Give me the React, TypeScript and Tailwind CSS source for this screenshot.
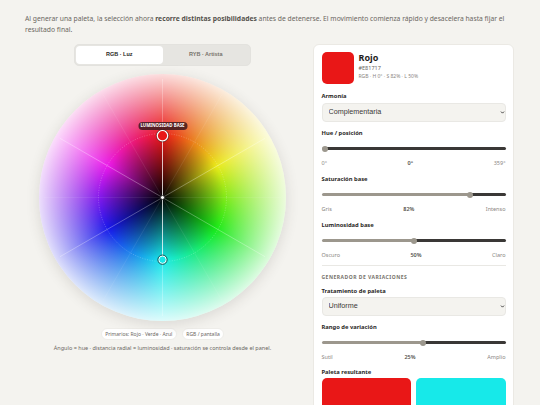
import { ChevronDown } from 'lucide-react'

const spokes = [0, 30, 60, 90, 120, 150, 180, 210, 240, 270, 300, 330]

function Slider({ className, label, pct, left, mid, right }: { className: string; label: string; pct: number; left: string; mid: string; right: string }) {
  return (
    <div className={className}>
      <div className="text-[5.8px] font-bold leading-[10px] text-[#2a2826]">{label}</div>
      <div className="mt-[6px] flex h-[10px] items-center">
        <div className="h-[3px] rounded-l-full bg-[#9c978d]" style={{ width: `calc((100% - 6px) * ${pct / 100} + 3px)` }} />
        <div className="z-10 -mx-[3px] h-[6px] w-[6px] shrink-0 rounded-full bg-[#9c978d]" />
        <div className="h-[3px] flex-1 rounded-r-full bg-[#3a3836]" />
      </div>
      <div className="mt-[5px] flex justify-between text-[5.5px] leading-[8px] text-[#8a867f]">
        <span>{left}</span>
        <span className="font-semibold text-[#55524d]">{mid}</span>
        <span>{right}</span>
      </div>
    </div>
  )
}

function Select({ className, value }: { className: string; value: string }) {
  return (
    <div className={`relative ${className}`}>
      <select className="block h-[19px] w-full appearance-none rounded-[4px] border border-[#e9e8e4] bg-[#f4f3ef] pl-[6px] font-['Liberation_Sans',sans-serif] text-[7.2px] text-[#3a3836]">
        <option>{value}</option>
      </select>
      <ChevronDown className="pointer-events-none absolute right-[1px] top-[7px] h-[5px] w-[5px] text-[#222]" strokeWidth={4} />
    </div>
  )
}

function Wheel() {
  return (
    <div className="relative h-[247px] w-[247px] rounded-full bg-[radial-gradient(circle_closest-side,#000_0%,rgba(0,0,0,0)_50%,rgba(255,255,255,0)_50%,rgba(255,255,255,0.86)_100%),conic-gradient(#e91818,#e9e918,#18e918,#18e9e9,#1818e9,#e918e9,#e91818)] shadow-[0_3px_14px_rgba(60,50,40,0.14)]">
      <svg viewBox="0 0 247 247" className="absolute inset-0 h-full w-full">
        {spokes.map((a) => (
          <line
            key={a}
            x1="123.5"
            y1="123.5"
            x2="123.5"
            y2="5"
            stroke="#fff"
            strokeWidth="0.7"
            strokeOpacity={a % 60 === 0 ? 0.38 : 0.1}
            transform={`rotate(${a} 123.5 123.5)`}
          />
        ))}
        <circle cx="123.5" cy="123.5" r="64" fill="none" stroke="#fff" strokeOpacity="0.4" strokeWidth="0.6" strokeDasharray="1 1.5" />
        <line x1="123.5" y1="123.5" x2="123.5" y2="62" stroke="#fff" strokeOpacity="0.75" strokeWidth="0.9" />
        <line x1="123.5" y1="123.5" x2="123.5" y2="186" stroke="#fff" strokeOpacity="0.75" strokeWidth="0.9" />
        <circle cx="123.5" cy="123.5" r="2" fill="#fff" stroke="#222" strokeWidth="0.8" />
        <circle cx="123.5" cy="61.7" r="5.3" fill="#e91818" stroke="#fff" strokeWidth="1.4" />
        <circle cx="123.5" cy="61.7" r="6.2" fill="none" stroke="#222" strokeWidth="0.5" />
        <circle cx="123.5" cy="185.7" r="3.7" fill="#18e9e9" stroke="#fff" strokeWidth="1" />
        <circle cx="123.5" cy="185.7" r="4.7" fill="none" stroke="#222" strokeWidth="0.7" />
      </svg>
      <div className="absolute left-1/2 top-[48px] flex h-[8px] w-[49px] -translate-x-1/2 items-center justify-center whitespace-nowrap rounded-full bg-[#3c1a1e]/85 text-[4.4px] font-bold text-white">
        LUMINOSIDAD BASE
      </div>
    </div>
  )
}

export default function App() {
  return (
    <div className="h-[405px] w-[540px] overflow-hidden bg-[#f4f3ef] px-[25px] pt-[14px] font-['Noto_Sans',sans-serif] text-[#6b675f]">
      <p className="w-[490px] text-[6.75px] leading-[10.5px]">
        Al generar una paleta, la selección ahora <strong className="font-bold text-[#55524d]">recorre distintas posibilidades</strong> antes de detenerse. El movimiento comienza rápido y desacelera hasta fijar el resultado final.
      </p>
      <div className="mt-[8.5px] flex items-start gap-[13px]">
        <div className="flex w-[275px] flex-col items-center">
          <div className="flex h-[22px] w-[177px] rounded-[5px] border border-[#e3e2de] bg-[#e6e5e1] p-[1px] font-['Liberation_Sans',sans-serif] text-[5.5px] font-bold">
            <div className="flex flex-1 items-center justify-center rounded-[4px] bg-white text-[#2a2826]">RGB · Luz</div>
            <div className="flex flex-1 items-center justify-center text-[#77736b]">RYB · Artista</div>
          </div>
          <div className="mt-[8px]">
            <Wheel />
          </div>
          <div className="mt-[7px] flex gap-[5px] text-[5px]">
            <span className="rounded-full border border-[#eeede9] bg-white px-[3.5px] py-[1px] leading-[8px]">Primarios: Rojo · Verde · Azul</span>
            <span className="rounded-full border border-[#eeede9] bg-white px-[3.5px] py-[1px] leading-[8px]">RGB / pantalla</span>
          </div>
          <p className="mt-[4px] text-[5.5px] leading-[8px]">Ángulo = hue · distancia radial = luminosidad · saturación se controla desde el panel.</p>
        </div>
        <div className="h-[420px] w-[201px] shrink-0 rounded-[6px] border border-[#ebe9e4] bg-white p-[7.5px]">
          <div className="flex gap-[5px]">
            <div className="h-[32px] w-[32px] rounded-[5px] bg-[#e91717]" />
            <div>
              <div className="text-[9px] font-bold leading-[12px] text-[#1f1d1b]">Rojo</div>
              <div className="text-[5.5px] leading-[8px]">#E81717</div>
              <div className="text-[5px] leading-[9px] text-[#8a867f]">RGB · H 0° · S 82% · L 50%</div>
            </div>
          </div>
          <div className="mt-[7px] text-[5.8px] font-bold leading-[10px] text-[#2a2826]">Armonía</div>
          <Select className="mt-[2px]" value="Complementaria" />
          <Slider className="mt-[5.5px]" label="Hue / posición" pct={0} left="0°" mid="0°" right="359°" />
          <Slider className="mt-[7px]" label="Saturación base" pct={82} left="Gris" mid="82%" right="Intenso" />
          <Slider className="mt-[7px]" label="Luminosidad base" pct={50} left="Oscuro" mid="50%" right="Claro" />
          <div className="mt-[6px] border-t border-[#e9e8e4] pt-[7px] text-[5px] font-bold leading-[8px] tracking-[0.5px] text-[#77736b]">GENERADOR DE VARIACIONES</div>
          <div className="mt-[5px] text-[5.8px] font-bold leading-[10px] text-[#2a2826]">Tratamiento de paleta</div>
          <Select className="mt-[1px]" value="Uniforme" />
          <Slider className="mt-[6px]" label="Rango de variación" pct={55.6} left="Sutil" mid="25%" right="Amplio" />
          <div className="mt-[6px] text-[5.8px] font-bold leading-[10px] text-[#2a2826]">Paleta resultante</div>
          <div className="mt-[1.5px] grid grid-cols-2 gap-[4.5px]">
            <div className="h-[40px] rounded-[5px] bg-[#e91717]" />
            <div className="h-[40px] rounded-[5px] bg-[#17e9e9]" />
          </div>
        </div>
      </div>
    </div>
  )
}
